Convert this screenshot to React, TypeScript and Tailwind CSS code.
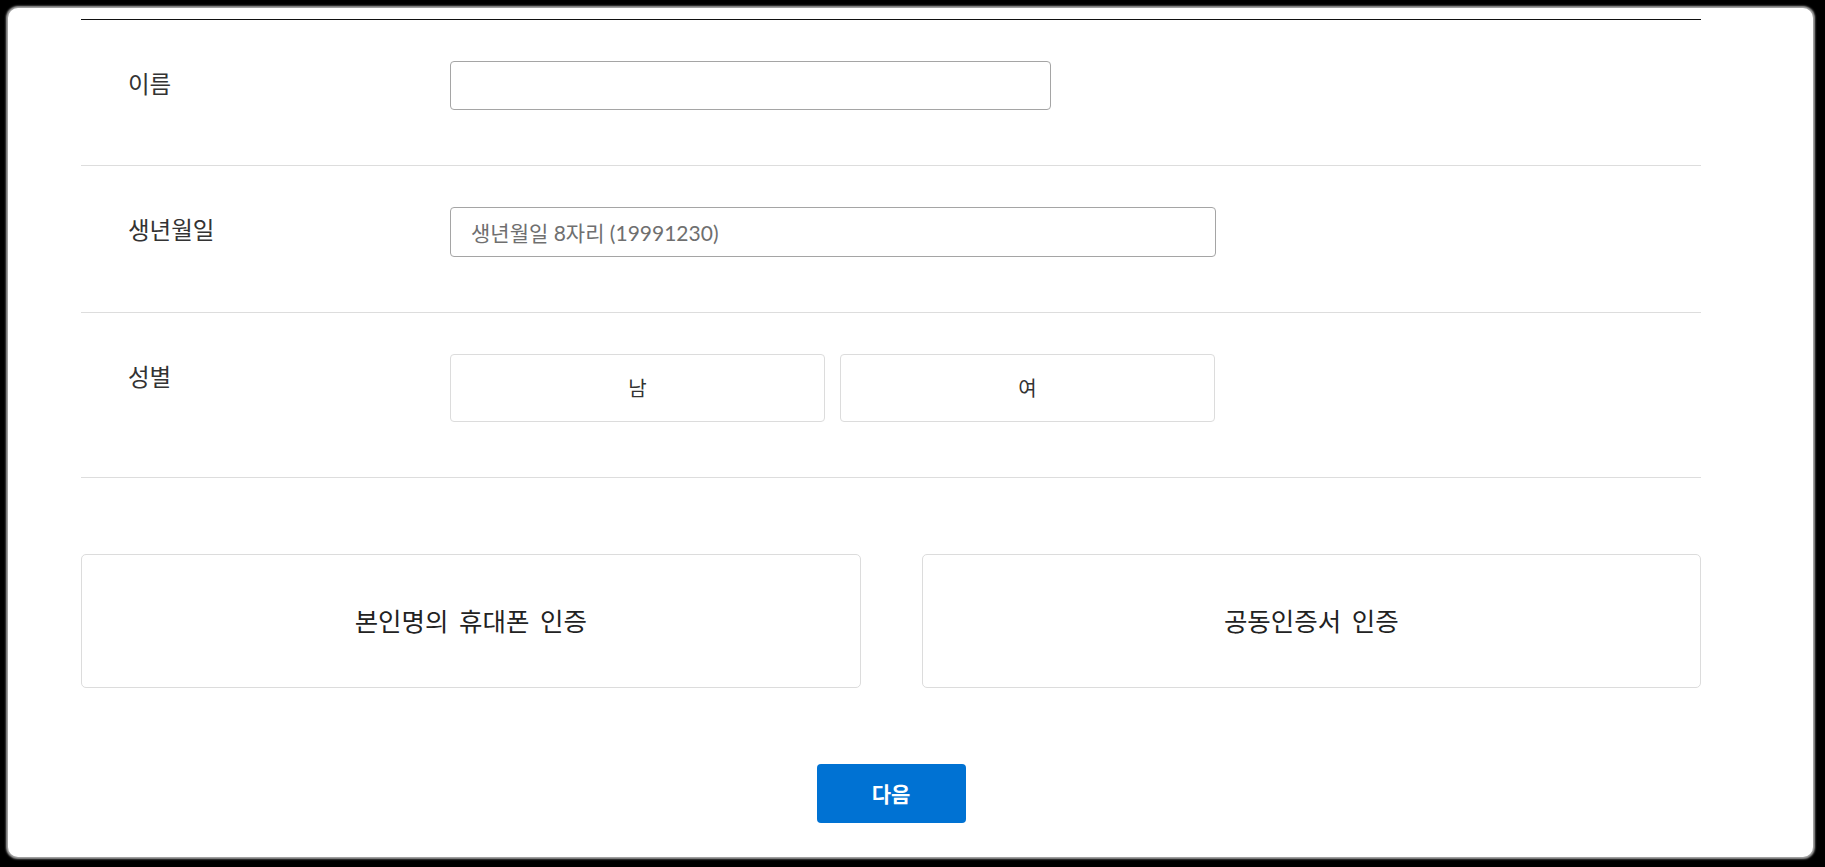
import { useState } from "react";

const font = { fontFamily: "Lato, 'Noto Sans CJK KR', sans-serif" };

function Row({ label, children }: { label: string; children: React.ReactNode }) {
  return (
    <div className="flex border-b border-[#dddddd] pt-[41px] pb-[55px]">
      <div className="w-[369px] shrink-0 pl-[47px] h-[48px] flex items-center text-[23.5px] text-[#333]">{label}</div>
      <div className="flex-1">{children}</div>
    </div>
  );
}

export default function App() {
  const [name, setName] = useState("");
  const [birth, setBirth] = useState("");
  const [gender, setGender] = useState<"m" | "f" | null>(null);

  return (
    <div className="min-h-screen bg-black pl-[8px] pt-[8px] pr-[12px] pb-[10px]" style={font}>
      <div className="h-[849px] bg-white rounded-[10px] shadow-[0_0_2px_2px_#a8a8a8] pt-[11px]">
        <div className="ml-[73px] w-[1620px]">
          <div className="border-t border-[#111]">
            <Row label="이름">
              <input value={name} onChange={e => setName(e.target.value)}
                className="w-[601px] h-[49px] rounded-[4px] border border-[#a5a5a5] px-[20px] text-[21px] outline-none" />
            </Row>
            <Row label="생년월일">
              <input value={birth} onChange={e => setBirth(e.target.value)} placeholder="생년월일 8자리 (19991230)"
                className="w-[766px] h-[50px] rounded-[4px] border border-[#a5a5a5] px-[20px] text-[21px] text-[#333] placeholder:text-[#6f6f6f] outline-none" />
            </Row>
            <Row label="성별">
              <div className="flex gap-[15px] w-[765px]">
                {([["m", "남"], ["f", "여"]] as const).map(([k, t]) => (
                  <button key={k} onClick={() => setGender(k)}
                    className={"flex-1 h-[68px] rounded-[4px] border text-[20px] text-[#333] " + (gender === k ? "border-[#0072d3]" : "border-[#dcdcdc]")}>
                    {t}
                  </button>
                ))}
              </div>
            </Row>
          </div>

          <div className="grid grid-cols-2 gap-[61px] mt-[76px]">
            <button className="h-[134px] rounded-[5px] border border-[#dcdcdc] text-[25.5px] text-[#222] [word-spacing:4px]">본인명의 휴대폰 인증</button>
            <button className="h-[134px] rounded-[5px] border border-[#dcdcdc] text-[25.5px] text-[#222] [word-spacing:4px]">공동인증서 인증</button>
          </div>

          <div className="flex justify-center mt-[76px]">
            <button className="w-[149px] h-[59px] rounded-[4px] bg-[#0072d3] text-white text-[21px] font-semibold">다음</button>
          </div>
        </div>
      </div>
    </div>
  );
}
